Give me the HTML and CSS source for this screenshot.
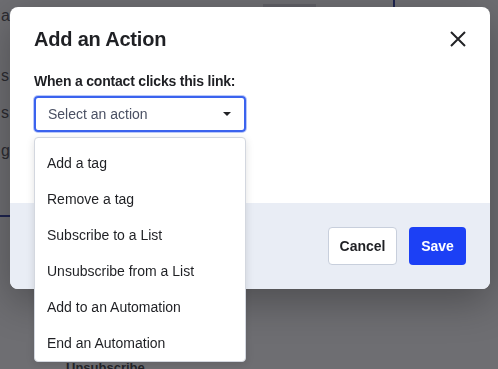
FILE: index.html
```html
<!DOCTYPE html>
<html lang="en">
<head>
    <meta charset="UTF-8">
    <meta name="viewport" content="width=device-width, initial-scale=1.0">
    <title>Add an Action</title>
    <link rel="stylesheet" href="styles.css">
</head>
<body>

<div class="page">
    <div class="page-top">
        <div class="page-tab"></div>
        <div class="page-rule"></div>
    </div>
    <p class="page-line">a</p>
    <p class="page-line">s</p>
    <p class="page-line tight">s y</p>
    <p class="page-line">g</p>
    <div class="page-underline"></div>
    <div class="page-footer">Unsubscribe</div>
</div>

<div class="overlay"></div>

<div class="modal">
    <div class="modal-body">
        <div class="modal-head">
            <h2 class="modal-title">Add an Action</h2>
            <button class="close-button" aria-label="Close">
                <svg width="16" height="16" viewBox="0 0 16 16">
                    <path d="M1 1 L15 15 M15 1 L1 15" stroke="#222326" stroke-width="2" fill="none"/>
                </svg>
            </button>
        </div>

        <label class="field-label">When a contact clicks this link:</label>
        <div class="select-wrap">
            <div class="select-box">
                <span>Select an action</span>
                <span class="caret"></span>
            </div>
            <ul class="select-menu">
                <li>Add a tag</li>
                <li>Remove a tag</li>
                <li>Subscribe to a List</li>
                <li>Unsubscribe from a List</li>
                <li>Add to an Automation</li>
                <li>End an Automation</li>
            </ul>
        </div>
    </div>

    <div class="modal-footer">
        <button class="btn btn-cancel">Cancel</button>
        <button class="btn btn-save">Save</button>
    </div>
</div>

</body>
</html>
```

FILE: styles.css
```css
body {
    margin: 0;
    font-family: "Liberation Sans", Arial, sans-serif;
    background-color: #fff;
    overflow: hidden;
    height: 369px;
}
.page {
    color: #3f4046;
    font-size: 16px;
}
.page-top {
    display: flex;
    height: 8px;
}
.page-tab {
    width: 53px;
    height: 4px;
    margin: 4px 0 0 263px;
    background-color: #d8d8dc;
}
.page-rule {
    width: 2px;
    margin-left: 77px;
    background-color: #1c2c9c;
}
.page-line {
    margin: 0;
    padding-left: 1px;
    line-height: 20px;
    white-space: nowrap;
}
.page-line.tight {
    word-spacing: -3px;
}
.page-line:nth-of-type(1) { margin-top: -2px; }
.page-line:nth-of-type(2) { margin-top: 40px; }
.page-line:nth-of-type(3) { margin-top: 17px; }
.page-line:nth-of-type(4) { margin-top: 18px; }
.page-underline {
    width: 120px;
    height: 2px;
    margin-top: 54px;
    background-color: #1c2c9c;
}
.page-footer {
    margin: 143px 0 0 66px;
    font-size: 13px;
    font-weight: bold;
    color: #2a2b30;
}
.overlay {
    position: fixed;
    inset: 0;
    background-color: rgba(32, 33, 38, 0.65);
}

.modal {
    position: absolute;
    left: 10px;
    top: 7px;
    width: 480px;
    background-color: #fff;
    border-radius: 8px;
    box-shadow: 0 12px 40px rgba(0, 0, 0, 0.3);
}
.modal-body {
    padding: 20px 24px 71px;
}
.modal-head {
    display: flex;
    justify-content: space-between;
    align-items: center;
    height: 24px;
    margin-bottom: 20px;
}
.modal-title {
    margin: 0;
    font-size: 20px;
    font-weight: bold;
    color: #1f2024;
    letter-spacing: -0.2px;
}
.close-button {
    border: none;
    background: none;
    padding: 0;
    width: 16px;
    height: 16px;
    cursor: pointer;
}
.field-label {
    display: block;
    font-size: 14px;
    font-weight: bold;
    color: #1f2024;
    line-height: 20px;
    margin-bottom: 5px;
    letter-spacing: -0.2px;
}
.select-wrap {
    position: relative;
    width: 212px;
}
.select-box {
    display: flex;
    justify-content: space-between;
    align-items: center;
    height: 32px;
    padding: 0 12px;
    border: 2px solid #3b63ee;
    border-radius: 4px;
    box-shadow: 0 0 0 1px #b9c8fa;
    font-size: 14px;
    color: #4a5063;
}
.caret {
    width: 0;
    height: 0;
    border-left: 4px solid transparent;
    border-right: 4px solid transparent;
    border-top: 4px solid #222326;
    margin-right: 1px;
}
.select-menu {
    position: absolute;
    left: 0;
    right: 0;
    top: 41px;
    list-style: none;
    margin: 0;
    padding: 7px 0 0;
    height: 216px;
    overflow: hidden;
    background-color: #fff;
    border: 1px solid #d3d7df;
    border-radius: 4px;
    box-shadow: 0 2px 8px rgba(0, 0, 0, 0.12);
    z-index: 2;
}
.select-menu li {
    height: 36px;
    line-height: 36px;
    padding-left: 12px;
    font-size: 14px;
    color: #1f2024;
}

.modal-footer {
    display: flex;
    justify-content: flex-end;
    gap: 12px;
    padding: 24px;
    background-color: #e9edf5;
    border-radius: 0 0 8px 8px;
}
.btn {
    height: 38px;
    padding: 0;
    border-radius: 4px;
    font-family: inherit;
    font-size: 14px;
    font-weight: bold;
    cursor: pointer;
}
.btn-cancel {
    width: 69px;
    background-color: #fff;
    color: #1f2024;
    border: 1px solid #c8cfdc;
}
.btn-save {
    width: 57px;
    background-color: #1c40f5;
    color: #fff;
    border: none;
}
```
